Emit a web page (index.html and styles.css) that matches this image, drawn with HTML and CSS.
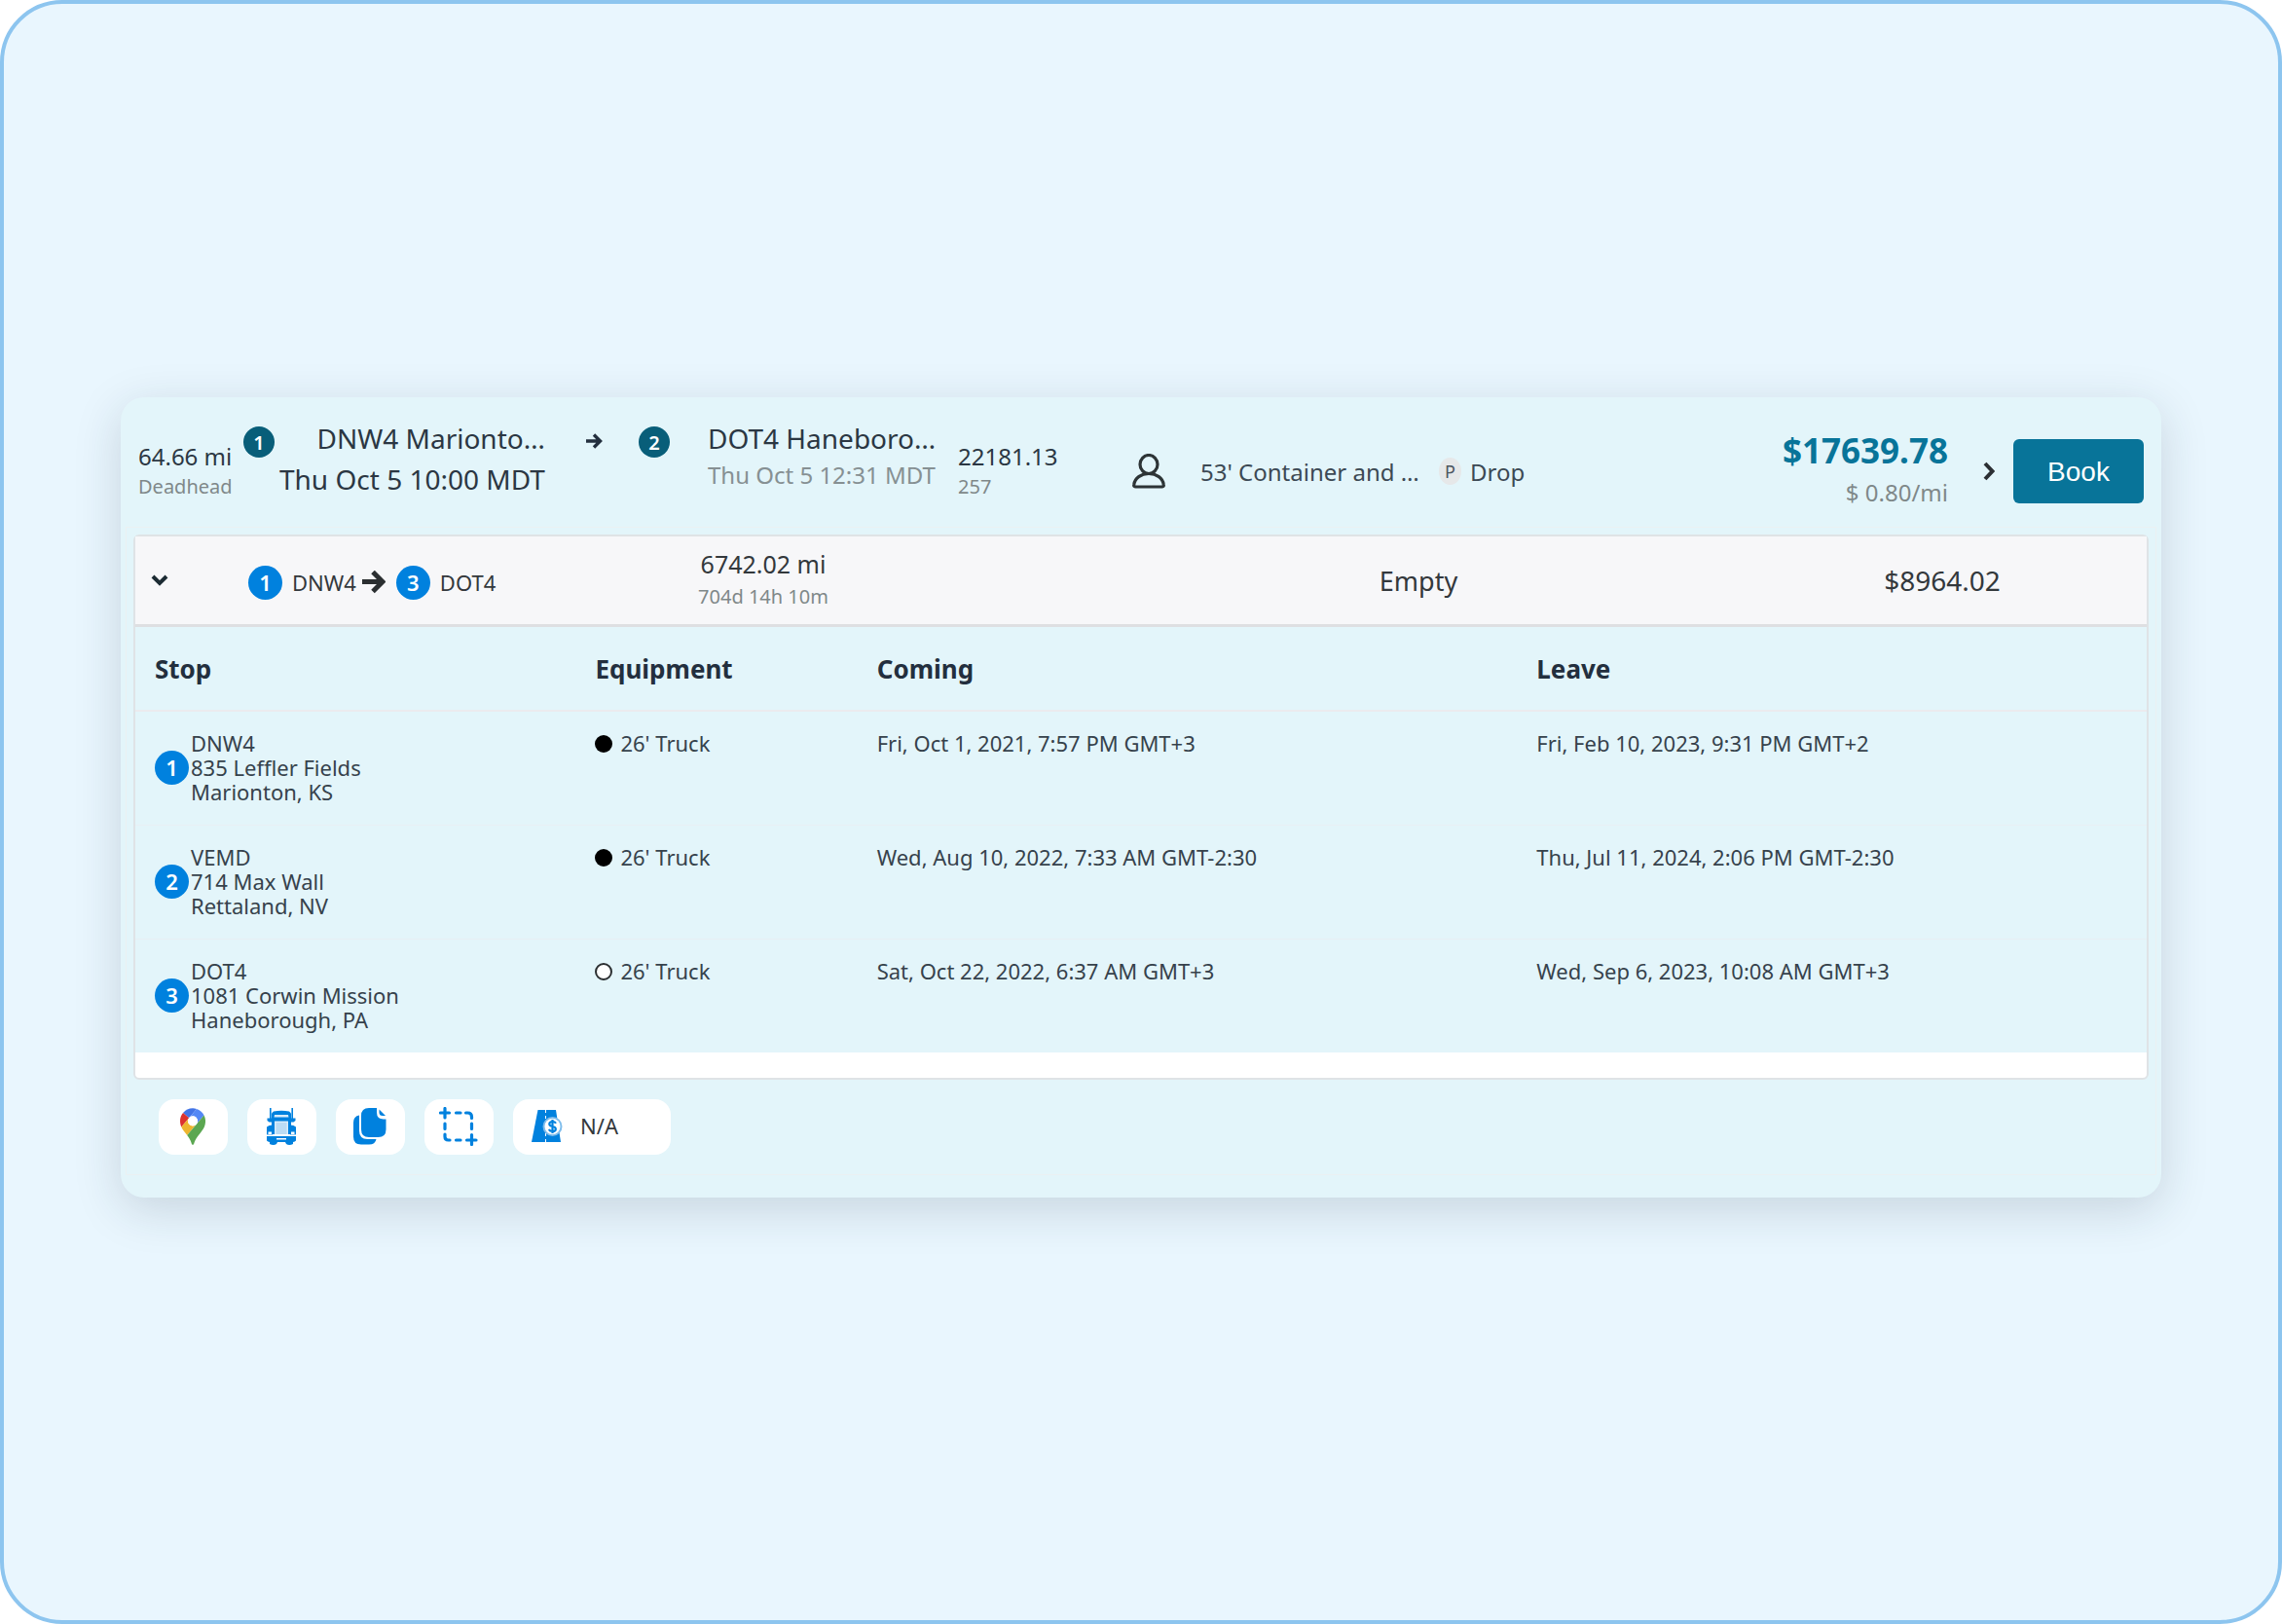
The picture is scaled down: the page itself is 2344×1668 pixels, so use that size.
FILE: index.html
```html
<!DOCTYPE html>
<html lang="en">
<head>
<meta charset="utf-8">
<title>Load details</title>
<link rel="stylesheet" href="styles.css">
</head>
<body>
<main class="stage">
  <article class="load">
    <header class="load-head">
      <div class="distance">
        <div class="value">64.66 mi</div>
        <div class="note">Deadhead</div>
      </div>
      <div class="marker"><span class="badge badge-dark">1</span></div>
      <div class="place place-from">
        <div class="place-name">DNW4 Marionto…</div>
        <div class="place-time">Thu Oct 5 10:00 MDT</div>
      </div>
      <div class="marker">
        <svg class="arrow-small" viewBox="0 0 18 18" aria-hidden="true"><path d="M0 8h14M8 1.500l6.500 6.500L8 14.500" fill="none" stroke="#232f3e" stroke-width="3.400"/></svg>
      </div>
      <div class="marker"><span class="badge badge-dark">2</span></div>
      <div class="place">
        <div class="place-name">DOT4 Haneboro…</div>
        <div class="place-time muted">Thu Oct 5 12:31 MDT</div>
      </div>
      <div class="distance">
        <div class="value">22181.13</div>
        <div class="note">257</div>
      </div>
      <svg class="driver" viewBox="0 0 36 36" aria-hidden="true"><g fill="none" stroke="#2d3436" stroke-width="3.200"><ellipse cx="17" cy="11" rx="9" ry="9.500"/><path d="M3.500 34h27c1.200 0 2-.8 1.800-2C31.500 25 25 20.500 17 20.500S2.500 25 1.700 32c-.2 1.200.6 2 1.800 2z"/></g></svg>
      <div class="value soft">53' Container and …</div>
      <div class="drop">
        <span class="p-mark">P</span>
        <span class="value soft">Drop</span>
      </div>
      <div class="price">
        <div class="price-total">$17639.78</div>
        <div class="price-rate">$ 0.80/mi</div>
      </div>
      <svg class="chevron-right" viewBox="0 0 12 20" aria-hidden="true"><path d="M2 2l7.500 8L2 18" fill="none" stroke="#2b2f33" stroke-width="4"/></svg>
      <button class="book" type="button">Book</button>
    </header>

    <div class="frame">
      <section class="panel">
        <div class="leg">
          <button class="toggle" type="button" aria-label="Collapse leg" aria-expanded="true">
            <svg viewBox="0 0 18 12" aria-hidden="true"><path d="M2 2l7 7 7-7" fill="none" stroke="#1c2b33" stroke-width="4"/></svg>
          </button>
          <div class="route">
            <span class="badge">1</span>
            <span class="code">DNW4</span>
            <svg class="arrow" viewBox="0 0 24 24" aria-hidden="true"><path d="M0 11.500h19M11 1.500l10 10-10 10" fill="none" stroke="#2b2f31" stroke-width="5"/></svg>
            <span class="badge">3</span>
            <span class="code">DOT4</span>
          </div>
          <div class="leg-miles">
            <div>6742.02 mi</div>
            <div class="note">704d 14h 10m</div>
          </div>
          <div class="leg-load">Empty</div>
          <div class="leg-price">$8964.02</div>
        </div>

        <table class="stops">
          <colgroup><col class="c-stop"><col class="c-equip"><col class="c-coming"><col></colgroup>
          <thead>
            <tr><th scope="col">Stop</th><th scope="col">Equipment</th><th scope="col">Coming</th><th scope="col">Leave</th></tr>
          </thead>
          <tbody>
            <tr>
              <td><div class="stop"><span class="badge">1</span><div>DNW4<br>835 Leffler Fields<br>Marionton, KS</div></div></td>
              <td><div class="equip"><span class="dot"></span>26' Truck</div></td>
              <td>Fri, Oct 1, 2021, 7:57 PM GMT+3</td>
              <td>Fri, Feb 10, 2023, 9:31 PM GMT+2</td>
            </tr>
            <tr>
              <td><div class="stop"><span class="badge">2</span><div>VEMD<br>714 Max Wall<br>Rettaland, NV</div></div></td>
              <td><div class="equip"><span class="dot"></span>26' Truck</div></td>
              <td>Wed, Aug 10, 2022, 7:33 AM GMT-2:30</td>
              <td>Thu, Jul 11, 2024, 2:06 PM GMT-2:30</td>
            </tr>
            <tr>
              <td><div class="stop"><span class="badge">3</span><div>DOT4<br>1081 Corwin Mission<br>Haneborough, PA</div></div></td>
              <td><div class="equip"><span class="dot dot-open"></span>26' Truck</div></td>
              <td>Sat, Oct 22, 2022, 6:37 AM GMT+3</td>
              <td>Wed, Sep 6, 2023, 10:08 AM GMT+3</td>
            </tr>
          </tbody>
        </table>
      </section>

      <div class="tools">
        <button class="tool" type="button" aria-label="Open in maps">
          <svg width="26" height="38" viewBox="0 0 92.300 132.300"><path fill="#4274e6" d="M60.200 2.200C55.800.8 51 0 46.100 0 32 0 19.300 6.400 10.800 16.500l21.800 18.300L60.200 2.200z"/><path fill="#dc322f" d="M10.800 16.500C4.100 24.500 0 34.900 0 46.100c0 8.700 1.700 15.700 4.600 22l28-33.300-21.800-18.300z"/><path fill="#5488f5" d="M46.200 28.500c9.800 0 17.700 7.900 17.700 17.700 0 4.300-1.600 8.300-4.200 11.400 0 0 13.900-16.600 27.500-32.700-5.600-10.800-15.300-19-27-22.700L32.600 34.800c3.300-3.800 8.100-6.300 13.600-6.300"/><path fill="#edb52f" d="M46.200 63.800c-9.800 0-17.700-7.900-17.700-17.700 0-4.300 1.500-8.300 4.100-11.300l-28 33.300c4.800 10.600 12.800 19.200 21 29.900l34.100-40.500c-3.300 3.900-8.100 6.300-13.500 6.300"/><path fill="#5ba751" d="M59.100 109.200c15.400-24.100 33.300-35 33.300-63 0-7.700-1.900-14.900-5.200-21.300L25.600 98c2.600 3.400 5.300 7.300 7.900 11.300 9.400 14.500 6.800 23.100 12.800 23.100s3.400-8.700 12.800-23.200"/><circle cx="46.200" cy="46.200" r="18" fill="#fff"/></svg>
        </button>
        <button class="tool" type="button" aria-label="Truck">
          <svg width="32" height="38" viewBox="0 0 32 38"><g fill="#0081de"><path d="M4 0h1.600v11H4zM26.400 0H28v11h-1.600z"/><path d="M8 3.500Q16 2 24 3.500l2 2V12H6V5.500z"/><path d="M1.500 10.500H6v4H3.500L1.500 13zM26 10.500h4.500V13l-2 1.500H26z"/><path d="M6 11h20v16H6z"/><path d="M1 19.500q2-2 6-2v10H1zM31 19.500q-2-2-6-2v10h6z"/><path d="M1 29h30v4.500q-1 1-3 1.500v2q-4 2-7 0l-1-2h-8l-1 2q-3 2-7 0v-2q-2-.5-3-1.500z"/></g><path fill="#d9ecfa" d="M9 7h14l.5 2.500h-15zM9 13.500h14V27H9z"/><path fill="#bcdcf4" d="M10.500 15h11v12h-11z"/><path fill="#fff" d="M2.500 24.500h3.500V27H2.500zM26 24.500h3.500V27H26zM11 31h10v1.500H11z"/><path stroke="#fff" d="M1 28.300h30"/></svg>
        </button>
        <button class="tool" type="button" aria-label="Copy">
          <svg width="34" height="38" viewBox="0 0 34 38"><g fill="#0081de"><path d="M6 7.500v16q0 8.500 8.500 8.500h9q-1 5.500-7.500 5.500H8q-8 0-8-8V15q0-6.500 6-7.500z"/><path d="M16 0h8v4.500q0 7 7 7h2.500V22q0 8-8 8H16q-8 0-8-8V8q0-8 8-8z"/><path d="M26.500 1.500L33 8h-3q-3.500 0-3.500-3.500z"/></g></svg>
        </button>
        <button class="tool" type="button" aria-label="Select area">
          <svg width="40" height="40" viewBox="0 0 40 40"><g fill="none" stroke="#0081de" stroke-width="3.200" stroke-linecap="round"><path d="M1.500 6h9M6 1.500V11M17.500 6h4.500M27.500 6h2q4 0 4 4v1.500M33.500 17v5.500M6 17v5.500M6 28v2.500q0 3.500 3.500 3.500H11M17.500 34H22M28.500 34H38M33.500 28.500V38.500"/></g></svg>
        </button>
        <button class="tool tool-wide" type="button" aria-label="Toll cost N/A">
          <svg width="32" height="34" viewBox="0 0 32 34"><path fill="#0081de" d="M6.500 0H25l5 33H0z"/><path stroke="#fff" stroke-width="1" stroke-dasharray="3 3" d="M14.500 0v34"/><circle cx="21.500" cy="17" r="10" fill="#7fbdec"/><circle cx="21.500" cy="17" r="8" fill="#fff"/><path fill="none" stroke="#0081de" stroke-width="2.200" d="M25 13.800q-1-1.800-3.500-1.800-3.200 0-3.200 2.500 0 2 3.200 2.500 3.300.5 3.300 2.700 0 2.300-3.300 2.300-2.700 0-3.700-2M21.500 10v14"/></svg>
          <span>N/A</span>
        </button>
      </div>
    </div>
  </article>
</main>
</body>
</html>
```
FILE: styles.css
```css
* { box-sizing: border-box; }

body {
  margin: 0;
  background: #fff;
  color: #2b3743;
  font-family: "Noto Sans", "Open Sans", sans-serif;
  font-size: 22px;
  line-height: 25px;
}

button { font: inherit; color: inherit; border: 0; padding: 0; }
svg { display: block; flex: none; }

.stage {
  min-height: 100vh;
  padding: 404px 120px;
  background: #e9f6fe;
  border: 4px solid #8dc5ef;
  border-radius: 64px;
}

.load {
  padding-bottom: 23px;
  background: #e3f5fa;
  border-radius: 24px;
  box-shadow: 0 12px 48px rgba(30, 45, 65, .17);
}

/* Header row */
.load-head {
  display: grid;
  grid-template-columns: 108fr 37fr 315fr 54fr 71fr 257fr 179fr 70fr 245fr 200fr 323fr 67fr 134px;
  align-items: center;
  height: 133px;
  padding: 19px 18px 0;
  white-space: nowrap;
}

.value { font-size: 24px; line-height: 31px; }
.soft { color: #3c4954; }
.note { font-size: 20px; line-height: 31px; color: #7f8889; }

.marker {
  display: flex;
  align-items: center;
  align-self: start;
  height: 54px;
}

.badge {
  display: flex;
  align-items: center;
  justify-content: center;
  flex: none;
  width: 35px;
  height: 35px;
  border-radius: 50%;
  background: #0081de;
  color: #fff;
  font-size: 22px;
  font-weight: 600;
}
.badge-dark {
  width: 32px;
  height: 32px;
  background: #085e79;
  font-size: 20px;
}

.place { align-self: start; font-size: 28px; }
.place-name { line-height: 46px; }
.place-time { line-height: 38px; }
.place-from { justify-self: start; text-align: right; }
.muted { font-size: 24px; line-height: 29px; color: #869093; }

.arrow-small { width: 18px; height: 18px; }
.driver { width: 36px; height: 36px; }

.drop { display: flex; align-items: center; gap: 9px; }
.p-mark {
  display: flex;
  align-items: center;
  justify-content: center;
  width: 23px;
  height: 28px;
  border-radius: 50%;
  background: #e6e8e9;
  color: #4c5660;
  font-size: 18px;
}

.price { text-align: right; line-height: 43px; }
.price-total { font-size: 35px; font-weight: 700; color: #087499; }
.price-rate { font-size: 24px; color: #7f8889; }

.chevron-right { width: 12px; height: 20px; margin-left: 36px; }

.book {
  height: 66px;
  border-radius: 6px;
  background: #087499;
  color: #fff;
  font-family: "Liberation Sans", Arial, sans-serif;
  font-size: 28px;
}

/* Expanded details */
.frame {
  margin: 0 5px;
  padding: 7px 7px 20px;
  border: 1px solid #ebf1f2;
}

.panel {
  background: #fff;
  border: 2px solid #dfe3e6;
  border-radius: 6px;
  padding-bottom: 26px;
}

.leg {
  display: grid;
  grid-template-columns: 116fr 362fr 334fr 178fr 656fr 420fr;
  align-items: center;
  height: 93px;
  background: #f7f7f9;
  border-bottom: 3px solid #dedfe2;
  color: #33383c;
}

.toggle { justify-self: start; margin-left: 16px; background: none; }
.toggle svg { width: 18px; height: 12px; }

.route { display: flex; align-items: center; padding-top: 4px; }
.code { margin-left: 10px; }
.arrow { width: 24px; height: 24px; margin: 0 11px 0 6px; }

.leg-miles { text-align: center; font-size: 25px; line-height: 34px; }
.leg-miles .note { line-height: 34px; }
.leg-load { grid-column: 5; text-align: center; font-size: 27px; }
.leg-price { text-align: center; font-size: 28px; }

.stops {
  width: 100%;
  table-layout: fixed;
  border-collapse: separate;
  border-spacing: 0;
  background: #e3f5fa;
  color: #36424c;
}
.c-stop { width: 21.9%; }
.c-equip { width: 14%; }
.c-coming { width: 32.8%; }

.stops th {
  height: 87px;
  padding: 2px 20px 0;
  border-bottom: 2px solid #ebebee;
  color: #232f3e;
  font-size: 26px;
  font-weight: 700;
  text-align: left;
}
.stops td {
  padding: 20px 0 21px 20px;
  border-bottom: 1px solid #e8eff4;
  vertical-align: top;
}
.stops tbody tr:last-child td { border-bottom: 0; }

.stop { display: flex; align-items: center; gap: 2px; }
.equip { display: flex; align-items: center; gap: 8px; }
.dot { width: 18px; height: 18px; border-radius: 50%; background: #000; }
.dot-open { background: #fff; border: 2px solid #2b2f31; }

/* Action buttons */
.tools { display: flex; gap: 20px; padding: 20px 26px 0; }
.tool {
  display: flex;
  align-items: center;
  justify-content: center;
  width: 71px;
  height: 57px;
  padding: 0 2px 2px 0;
  border-radius: 16px;
  background: #fff;
}
.tool-wide {
  justify-content: flex-start;
  gap: 18px;
  width: 162px;
  padding-left: 19px;
  color: #33383c;
}
```
